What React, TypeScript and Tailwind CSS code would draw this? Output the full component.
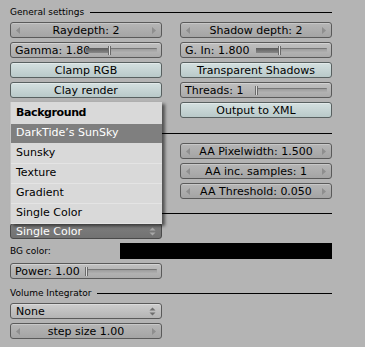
import React from "react";

const FONT = { fontFamily: '"DejaVu Sans", "Liberation Sans", sans-serif' };

function Tri({ dir }: { dir: "l" | "r" }) {
  return (
    <svg width="4" height="7" viewBox="0 0 4 7" className="shrink-0">
      {dir === "l" ? (
        <polygon points="4,0 4,7 0,3.5" fill="#8e8e8e" />
      ) : (
        <polygon points="0,0 0,7 4,3.5" fill="#8e8e8e" />
      )}
    </svg>
  );
}

function UpDown({ color }: { color: string }) {
  return (
    <svg width="7" height="9" viewBox="0 0 7 9" className="shrink-0">
      <polygon points="0.5,3.5 6.5,3.5 3.5,0.5" fill={color} />
      <polygon points="0.5,5.5 6.5,5.5 3.5,8.5" fill={color} />
    </svg>
  );
}

function NumBtn({ label }: { label: string }) {
  return (
    <div className="h-[16px] rounded-[3px] border border-[#5a5a5a] bg-gradient-to-b from-[#b6b6b6] to-[#a4a4a4] shadow-[inset_0_1px_0_rgba(255,255,255,0.25)] flex items-center px-[5px] text-[11px] leading-none text-black">
      <Tri dir="l" />
      <span className="flex-1 text-center whitespace-nowrap">{label}</span>
      <Tri dir="r" />
    </div>
  );
}

function Toggle({ label }: { label: string }) {
  return (
    <div className="h-[16px] rounded-[3px] border border-[#586060] bg-gradient-to-b from-[#d4e0e0] to-[#b9c9c9] shadow-[inset_0_1px_0_rgba(255,255,255,0.35)] flex items-center justify-center text-[11px] leading-none text-black whitespace-nowrap">
      {label}
    </div>
  );
}

function Slider({ label, frac }: { label: string; frac: number }) {
  return (
    <div className="h-[16px] rounded-[3px] border border-[#5a5a5a] bg-gradient-to-b from-[#c0c0c0] to-[#aaaaaa] shadow-[inset_0_1px_0_rgba(255,255,255,0.3)] grid grid-cols-2 items-center text-[11px] leading-none text-black">
      <span className="pl-[4px] whitespace-nowrap">{label}</span>
      <div className="pr-[4px]">
        <div className="relative h-[5px] rounded-[1px] border-t border-[#777] bg-gradient-to-b from-[#9c9c9c] to-[#b4b4b4]">
          <div
            className="absolute left-0 top-[-1px] h-[5px] bg-gradient-to-b from-[#5c5c5c] to-[#888888]"
            style={{ width: `${frac * 100}%` }}
          />
          <div
            className="absolute top-[-3px] h-[9px] w-[3px] bg-[#dcdcdc] border-x border-[#6a6a6a]"
            style={{ left: `calc(${frac * 100}% - 1px)` }}
          />
        </div>
      </div>
    </div>
  );
}

function Dropdown({ label, dark }: { label: string; dark?: boolean }) {
  return (
    <div
      className={
        dark
          ? "h-[16px] rounded-[3px] border border-[#4a4a4a] bg-gradient-to-b from-[#7e7e7e] to-[#727272] flex items-center pl-[5px] pr-[5px] text-[11px] leading-none text-white"
          : "h-[16px] rounded-[3px] border border-[#5a5a5a] bg-gradient-to-b from-[#cdcdcd] to-[#b4b4b4] shadow-[inset_0_1px_0_rgba(255,255,255,0.3)] flex items-center pl-[5px] pr-[5px] text-[11px] leading-none text-black"
      }
    >
      <span className="flex-1 whitespace-nowrap">{label}</span>
      <UpDown color={dark ? "#a8a8a8" : "#6e6e6e"} />
    </div>
  );
}

function Header({ label }: { label: string }) {
  return (
    <div className="h-[11px] flex items-center">
      <span className="text-[9px] leading-none text-black whitespace-nowrap">{label}</span>
      <div className="flex-1 h-px bg-black ml-[6px]" />
    </div>
  );
}

function MenuItem({ label, active }: { label: string; active?: boolean }) {
  return (
    <div
      className={
        active
          ? "h-[20px] flex items-center pl-[5px] text-[11px] text-white bg-[#7f7f7f] border-b border-[#d9d9d9]"
          : "h-[20px] flex items-center pl-[5px] text-[11px] text-black border-b border-[#e4e4e4]"
      }
    >
      {label}
    </div>
  );
}

export default function App() {
  return (
    <div className="relative w-[365px] h-[347px] bg-[#b4b4b4] overflow-hidden" style={FONT}>
      <div className="pl-[10px] pt-[7px] w-[332px]">
        <Header label="General settings" />
        <div className="mt-[4px] grid grid-cols-[152px_152px] gap-x-[18px] gap-y-[4px]">
          <NumBtn label="Raydepth: 2" />
          <NumBtn label="Shadow depth: 2" />
          <Slider label="Gamma: 1.80" frac={0.33} />
          <Slider label="G. In: 1.800" frac={0.33} />
          <Toggle label="Clamp RGB" />
          <Toggle label="Transparent Shadows" />
          <Toggle label="Clay render" />
          <Slider label="Threads: 1" frac={0} />
          <div className="h-[16px]" />
          <Toggle label="Output to XML" />
        </div>
        <div className="mt-[15px] h-px bg-black" />
        <div className="mt-[9px] grid grid-cols-[152px_152px] gap-x-[18px] gap-y-[4px]">
          <div className="h-[16px]" />
          <NumBtn label="AA Pixelwidth: 1.500" />
          <div className="h-[16px]" />
          <NumBtn label="AA inc. samples: 1" />
          <div className="h-[16px]" />
          <NumBtn label="AA Threshold: 0.050" />
        </div>
        <div className="mt-[14px] h-px bg-black" />
        <div className="mt-[9px] w-[152px]">
          <Dropdown label="Single Color" dark />
        </div>
        <div className="mt-[4px] flex items-center h-[16px]">
          <span className="w-[110px] text-[9px] leading-none text-black">BG color:</span>
          <div className="w-[212px] h-[16px] bg-black" />
        </div>
        <div className="mt-[4px] w-[152px]">
          <Slider label="Power: 1.00" frac={0} />
        </div>
        <div className="mt-[9px]">
          <Header label="Volume Integrator" />
        </div>
        <div className="mt-[4px] w-[152px] flex flex-col gap-[4px]">
          <Dropdown label="None" />
          <NumBtn label="step size 1.00" />
        </div>
      </div>

      <div className="absolute left-[10px] top-[102px] w-[152px] bg-[#d9d9d9] border-l border-[#c4c4c4] shadow-[3px_2px_3px_rgba(0,0,0,0.55)]">
        <div className="h-[22px] flex items-center pl-[5px] text-[11px] font-bold text-black tracking-[-0.4px]">
          Background
        </div>
        <MenuItem label="DarkTide’s SunSky" active />
        <MenuItem label="Sunsky" />
        <MenuItem label="Texture" />
        <MenuItem label="Gradient" />
        <MenuItem label="Single Color" />
      </div>
    </div>
  );
}
